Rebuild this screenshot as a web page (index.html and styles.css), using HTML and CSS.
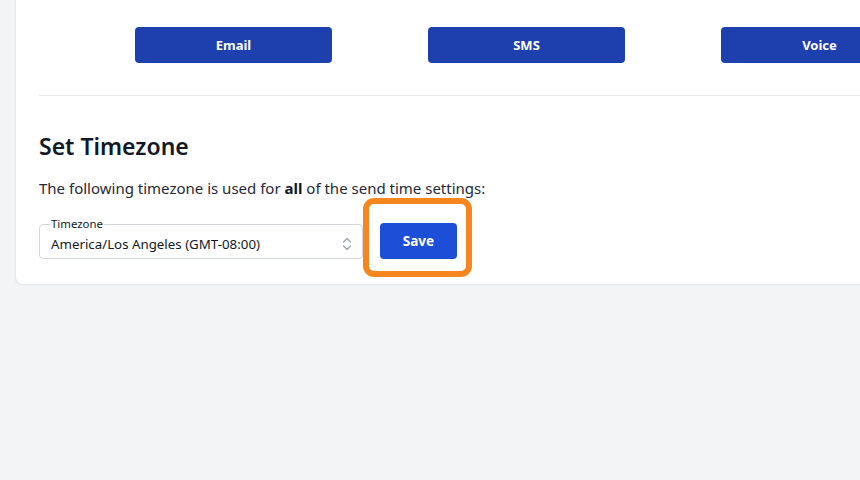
FILE: index.html
```html
<!DOCTYPE html>
<html>
<head>
<meta charset="utf-8">
<link rel="stylesheet" href="styles.css">
</head>
<body>
<div class="page">
  <div class="card">
    <div class="channels">
      <button class="channel">Email</button>
      <button class="channel">SMS</button>
      <button class="channel">Voice</button>
    </div>
    <hr class="divider">
    <h2 class="title">Set Timezone</h2>
    <p class="desc">The following timezone is used for <b>all</b> of the send time settings:</p>
    <div class="row">
      <fieldset class="select">
        <legend class="select-label">Timezone</legend>
        <div class="select-value">
          <span>America/Los Angeles (GMT-08:00)</span>
          <svg class="chev" width="10" height="16" viewBox="0 0 10 16"><path d="M1.5 6 L5 2.5 L8.5 6 M1.5 10 L5 13.5 L8.5 10" fill="none" stroke="#9ca3af" stroke-width="1.3" stroke-linecap="round" stroke-linejoin="round"/></svg>
        </div>
      </fieldset>
      <div class="save-wrap">
        <span class="highlight"></span>
        <button class="save">Save</button>
      </div>
    </div>
  </div>
</div>
</body>
</html>
```

FILE: styles.css
```css
html, body {
  margin: 0;
  padding: 0;
  background: #f3f4f6;
  overflow: hidden;
  width: 860px;
  height: 480px;
}
body {
  font-family: "Noto Sans", "Open Sans", sans-serif;
  color: #111827;
}
.page {
  padding-left: 15px;
  overflow: hidden;
}
.card {
  width: 920px;
  background: #fff;
  border: 1px solid #e5e7eb;
  border-top: none;
  border-radius: 0 0 8px 8px;
  box-shadow: 0 1px 2px rgba(0,0,0,0.06);
  padding: 27px 23px 25px 23px;
  box-sizing: border-box;
}
.channels {
  display: flex;
  gap: 96px;
  padding-left: 96px;
}
.channel {
  width: 197px;
  height: 36px;
  flex: none;
  border: none;
  border-radius: 4px;
  background: #1e40af;
  color: #fff;
  font-family: inherit;
  font-weight: 700;
  font-size: 13px;
  padding: 0;
}
.divider {
  margin: 32px 0 0 0;
  border: none;
  border-top: 1px solid #e5e7eb;
  height: 0;
}
.title {
  margin: 36px 0 0 0;
  font-size: 23px;
  line-height: 28px;
  font-weight: 600;
}
.desc {
  margin: 17px 0 0 0;
  font-size: 15px;
  line-height: 22px;
  color: #1f2937;
}
.desc b {
  color: #111827;
}
.row {
  display: flex;
  align-items: flex-end;
  gap: 17px;
  margin-top: 19px;
}
.select {
  width: 324px;
  box-sizing: border-box;
  margin: 0;
  padding: 0 11px 0 11px;
  border: 1px solid #d1d5db;
  border-radius: 4px;
  min-width: 0;
}
.select-label {
  font-size: 11.4px;
  line-height: 12px;
  padding: 0 1px;
  margin-left: -1px;
  color: #111827;
}
.select-value {
  display: flex;
  align-items: center;
  justify-content: space-between;
  height: 28px;
  font-size: 13.3px;
  color: #111827;
}
.chev {
  margin-right: -1px;
}
.save-wrap {
  position: relative;
  width: 77px;
  height: 36px;
}
.highlight {
  position: absolute;
  left: -17px;
  top: -25px;
  width: 109px;
  height: 79px;
  box-sizing: border-box;
  border: 6px solid #f7861e;
  border-radius: 11px;
}
.save {
  position: relative;
  width: 77px;
  height: 36px;
  border: none;
  border-radius: 4px;
  background: #1d4ed8;
  color: #fff;
  font-family: inherit;
  font-weight: 700;
  font-size: 13.5px;
  padding: 0;
}
```
